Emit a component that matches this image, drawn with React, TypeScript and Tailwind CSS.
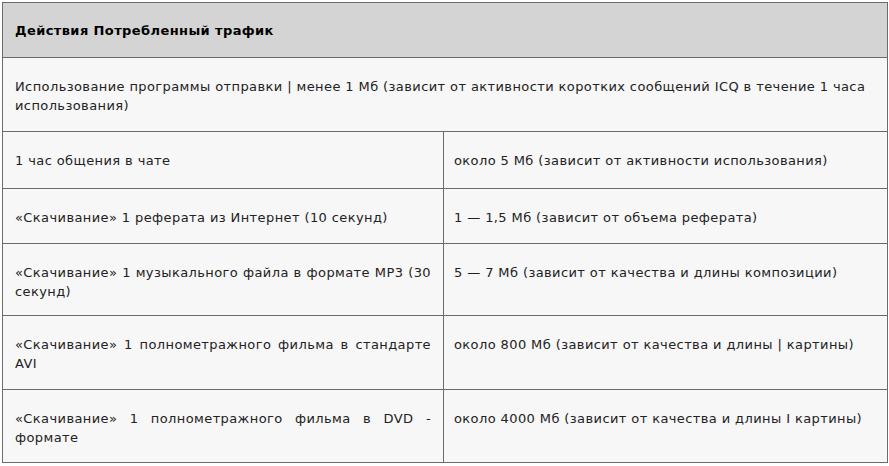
import React from "react";

const rows: { a: string; b: string; h: string }[] = [
  { a: "1 час общения в чате", b: "около 5 Мб (зависит от активности использования)", h: "h-[57px]" },
  { a: "«Скачивание» 1 реферата из Интернет (10 секунд)", b: "1 — 1,5 Мб (зависит от объема реферата)", h: "h-[55px]" },
  { a: "«Скачивание» 1 музыкального файла в формате MP3 (30 секунд)", b: "5 — 7 Мб (зависит от качества и длины композиции)", h: "h-[72px]" },
  { a: "«Скачивание» 1 полнометражного фильма в стандарте AVI", b: "около 800 Мб (зависит от качества и длины | картины)", h: "h-[74px]" },
  { a: "«Скачивание» 1 полнометражного фильма в DVD - формате", b: "около 4000 Мб (зависит от качества и длины I картины)", h: "h-[73px]" },
];

export default function App() {
  return (
    <div className="w-[889px] h-[466px] bg-white pt-[2px] pl-[2px]" style={{ fontFamily: '"DejaVu Sans", Verdana, sans-serif' }}>
      <table className="w-[885px] border-collapse table-fixed text-[13px] leading-[19px] tracking-[0.4px] text-[#222]">
        <colgroup>
          <col className="w-[441px]" />
          <col className="w-[444px]" />
        </colgroup>
        <tbody>
          <tr className="bg-[#d4d4d4] h-[55px]">
            <td colSpan={2} className="border border-[#6b6b6b] px-[12px] align-middle font-bold text-black">
              Действия Потребленный трафик
            </td>
          </tr>
          <tr className="bg-[#f7f7f7] h-[74px]">
            <td colSpan={2} className="border border-[#6b6b6b] px-[12px] pt-[19px] pb-0 align-top">
              Использование программы отправки | менее 1 Мб (зависит от активности коротких сообщений ICQ в течение 1 часа использования)
            </td>
          </tr>
          {rows.map((r, i) => (
            <tr key={i} className={`bg-[#f7f7f7] ${r.h}`}>
              <td className="border border-[#6b6b6b] px-[12px] pt-[19px] pb-0 align-top text-justify">{r.a}</td>
              <td className="border border-[#6b6b6b] px-[10px] pt-[19px] pb-0 align-top">{r.b}</td>
            </tr>
          ))}
        </tbody>
      </table>
    </div>
  );
}
